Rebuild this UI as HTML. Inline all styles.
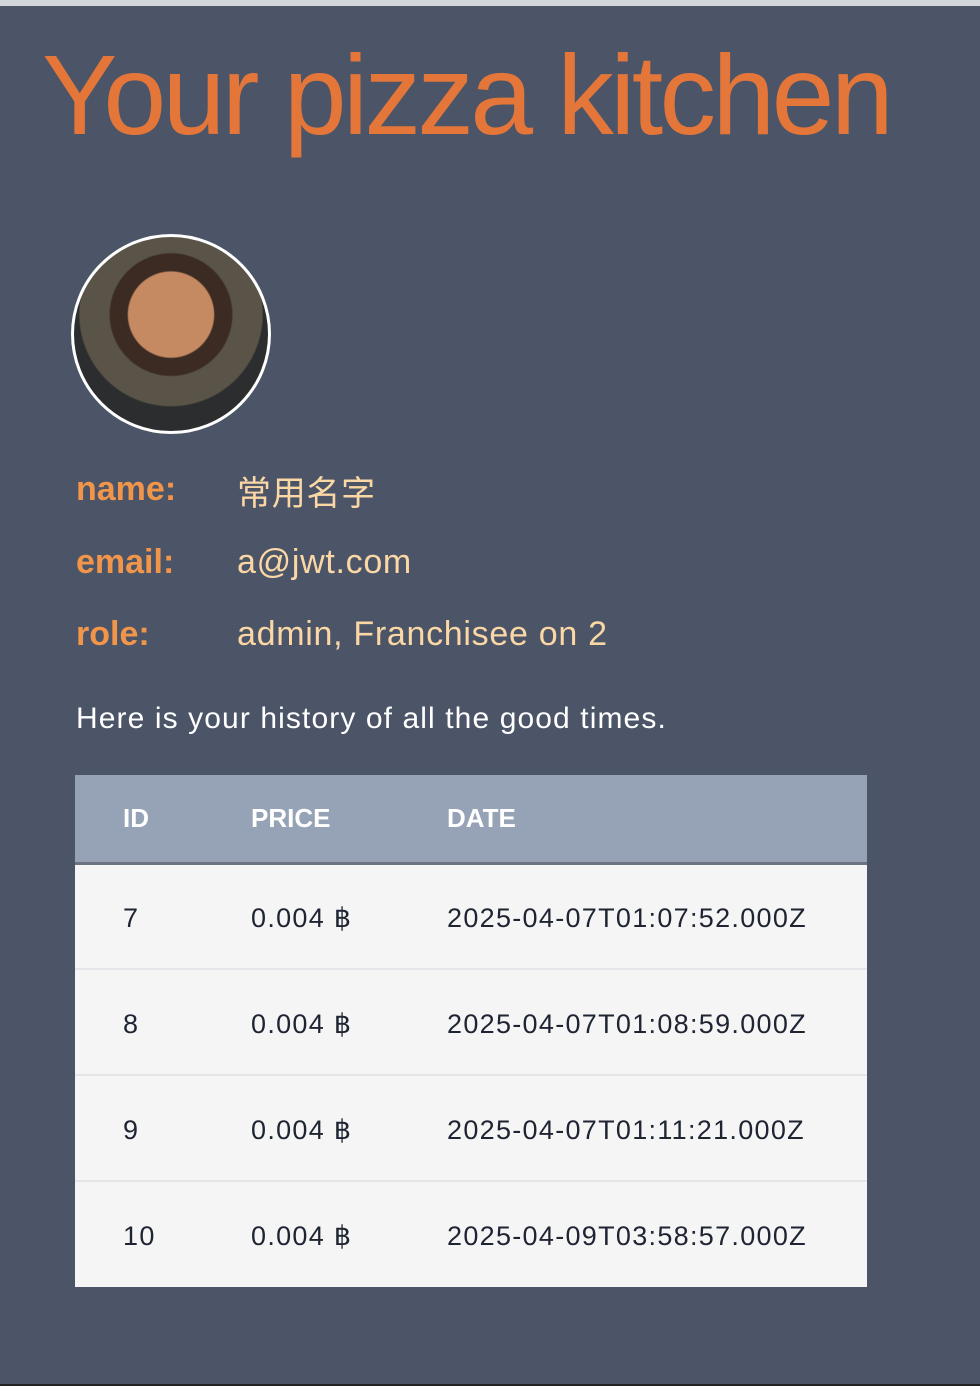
<!DOCTYPE html>
<html><head><meta charset="utf-8"><style>
*{margin:0;padding:0;box-sizing:border-box}
body{width:980px;height:1386px;background:#4b5567;font-family:"Liberation Sans","Noto Sans CJK SC",sans-serif;position:relative;overflow:hidden}
.top{position:absolute;left:0;top:0;width:980px;height:6px;background:#d2d5da}
.bot{position:absolute;left:0;top:1384px;width:980px;height:2px;background:#222}
.t{position:absolute;white-space:nowrap}
h1{position:absolute;left:42px;top:30px;font-weight:normal;font-size:113px;color:#e4763a;letter-spacing:-3.6px;line-height:130px;white-space:nowrap}
.av{position:absolute;left:71px;top:234px;width:200px;height:200px;border-radius:50%;border:3px solid #fff;background:radial-gradient(circle at 50% 40%,#c68a63 0 28%,#3b2b22 29% 40%,#5a5448 41% 60%,#2b2d2e 61%);overflow:hidden}
.lab{font-weight:bold;color:#f0954a;font-size:34px}
.val{color:#fbd7a6;font-size:34px;letter-spacing:0.7px}
table{position:absolute;left:75px;top:775px;width:792px;border-collapse:collapse}
th{background:#96a3b6;color:#fff;font-weight:bold;text-align:left;font-size:26px;height:88px;border-bottom:3px solid #6b7281;padding:0}
td{background:#f5f5f5;color:#1f2433;font-size:27px;letter-spacing:1.3px;height:106px;border-top:2px solid #e4e6ea;padding:0;padding-top:4px}
th:first-child,td:first-child{padding-left:48px;width:176px}
th:nth-child(2),td:nth-child(2){width:196px}
</style></head><body>
<div class="top"></div>
<h1>Your pizza kitchen</h1>
<div class="av"></div>
<div class="t lab" style="left:76px;top:470px">name:</div>
<div class="t val" style="left:237px;top:466px">常用名字</div>
<div class="t lab" style="left:76px;top:543px">email:</div>
<div class="t val" style="left:237px;top:543px">a@jwt.com</div>
<div class="t lab" style="left:76px;top:615px">role:</div>
<div class="t val" style="left:237px;top:615px">admin, Franchisee on 2</div>
<div class="t" style="left:76px;top:702px;color:#fff;font-size:30px;letter-spacing:1.1px">Here is your history of all the good times.</div>
<table>
<tr><th>ID</th><th>PRICE</th><th>DATE</th></tr>
<tr><td>7</td><td>0.004 ฿</td><td>2025-04-07T01:07:52.000Z</td></tr>
<tr><td>8</td><td>0.004 ฿</td><td>2025-04-07T01:08:59.000Z</td></tr>
<tr><td>9</td><td>0.004 ฿</td><td>2025-04-07T01:11:21.000Z</td></tr>
<tr><td>10</td><td>0.004 ฿</td><td>2025-04-09T03:58:57.000Z</td></tr>
</table>
<div class="bot"></div>
</body></html>
